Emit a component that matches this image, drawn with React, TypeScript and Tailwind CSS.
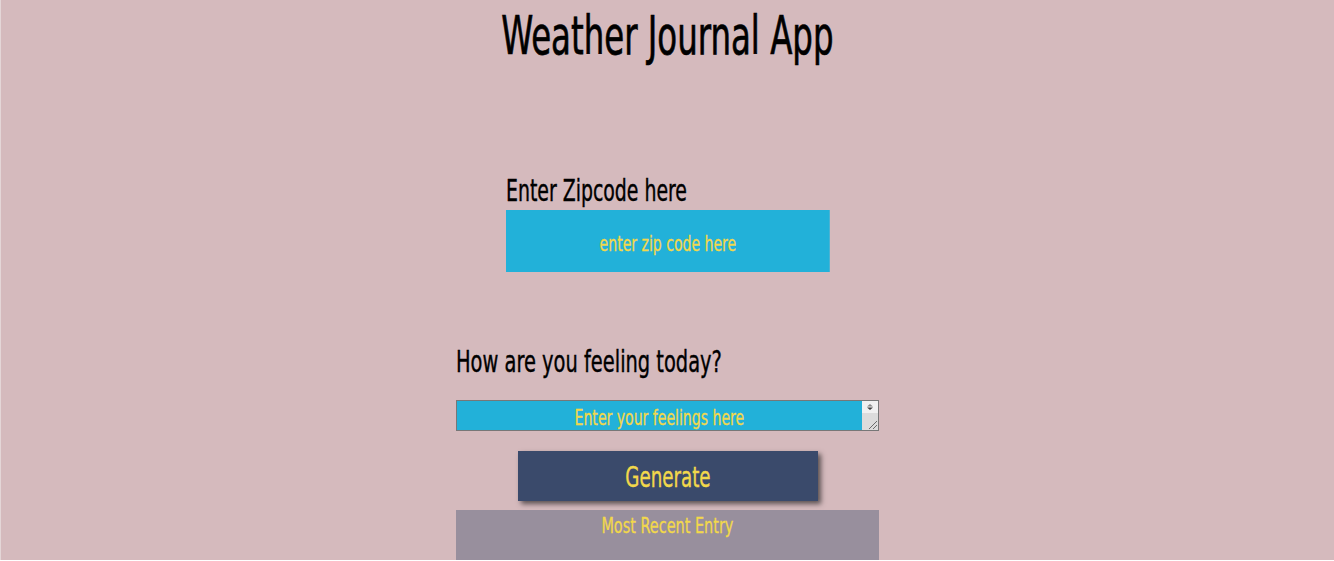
import React from 'react';

const face = "font-['DejaVu_Sans_Condensed','DejaVu_Sans',sans-serif] [font-stretch:condensed]";

// Oswald-like narrow text: condensed face squeezed a bit more
const Narrow = ({ children, className }: { children: React.ReactNode; className: string }) => (
  <span className={`inline-block whitespace-nowrap ${className}`}>{children}</span>
);

// classic scrollbar strip + resize grip seen on the textarea
const FakeScrollbar = () => (
  <div className="absolute right-0 top-0 bottom-0 w-[16px] flex flex-col">
    <div className="h-[12px] bg-[#f1f1f1] flex items-center justify-center">
      <svg width="8" height="8" viewBox="0 0 8 8">
        <path d="M4 1 L7 3.5 L1 3.5 Z" fill="#8a8a8a" />
        <path d="M1 4.5 L7 4.5 L4 7 Z" fill="#404040" />
      </svg>
    </div>
    <div className="flex-1 bg-[#dcdcdc] flex items-end justify-end">
      <svg width="10" height="10" viewBox="0 0 10 10">
        <path d="M9 1 L1 9 M9 5 L5 9" stroke="#6b6b6b" strokeWidth="1" />
      </svg>
    </div>
  </div>
);

const App = () => {
  return (
    <div className={`h-[560px] bg-[#d5babd] border-l border-[#e4d6d7] flex flex-col items-center ${face}`}>
      <h1 className="mt-[9px] h-[53px] text-[53px] leading-none font-normal text-black text-center [-webkit-text-stroke:0.7px]">
        <Narrow className="scale-x-[0.68] origin-center">Weather Journal App</Narrow>
      </h1>

      <div className="mt-[114px] w-[324px] flex flex-col">
        <label htmlFor="zip" className="h-[30px] text-[30px] leading-none text-black [-webkit-text-stroke:0.4px]">
          <Narrow className="scale-x-[0.7] origin-left">Enter Zipcode here</Narrow>
        </label>
        <input
          id="zip"
          type="text"
          placeholder="enter zip code here"
          className="mt-[4px] h-[62px] w-[456px] scale-x-[0.71] origin-left bg-[#22b1d9] text-center text-[22px] pt-[4px] text-[#f2d84b] placeholder:text-[#f2d84b] outline-none [-webkit-text-stroke:0.3px_#f2d84b]"
        />
      </div>

      <div className="mt-[75px] w-[423px] flex flex-col">
        <label htmlFor="feelings" className="h-[30px] text-[30px] leading-none text-black [-webkit-text-stroke:0.4px]">
          <Narrow className="scale-x-[0.72] origin-left">How are you feeling today?</Narrow>
        </label>
        <div className="relative mt-[23px] h-[31px] w-full border border-[#777777] bg-[#22b1d9] overflow-hidden">
          <textarea
            id="feelings"
            rows={1}
            placeholder="Enter your feelings here"
            className="block h-full w-[570px] scale-x-[0.71] origin-left bg-[#22b1d9] text-center text-[22px] leading-[26px] pt-[4px] px-[2px] text-[#f2d84b] placeholder:text-[#f2d84b] overflow-hidden resize-none outline-none [-webkit-text-stroke:0.3px_#f2d84b]"
          />
          <FakeScrollbar />
        </div>
      </div>

      <button className="mt-[20px] w-[300px] h-[50px] pt-[3px] bg-[#3a4a6b] text-[#f2d84b] text-[29px] leading-none shadow-[3px_3px_5px_#5b5152] [-webkit-text-stroke:0.4px_#f2d84b]">
        <Narrow className="scale-x-[0.7] origin-center">Generate</Narrow>
      </button>

      <div className="mt-[9px] w-[423px] h-[50px] bg-[#988f9d] flex flex-col items-center pt-[5px]">
        <h2 className="text-[22px] leading-none font-normal text-[#f2d84b] [-webkit-text-stroke:0.3px_#f2d84b]">
          <Narrow className="scale-x-[0.73] origin-center">Most Recent Entry</Narrow>
        </h2>
      </div>
    </div>
  );
};

export default App;
